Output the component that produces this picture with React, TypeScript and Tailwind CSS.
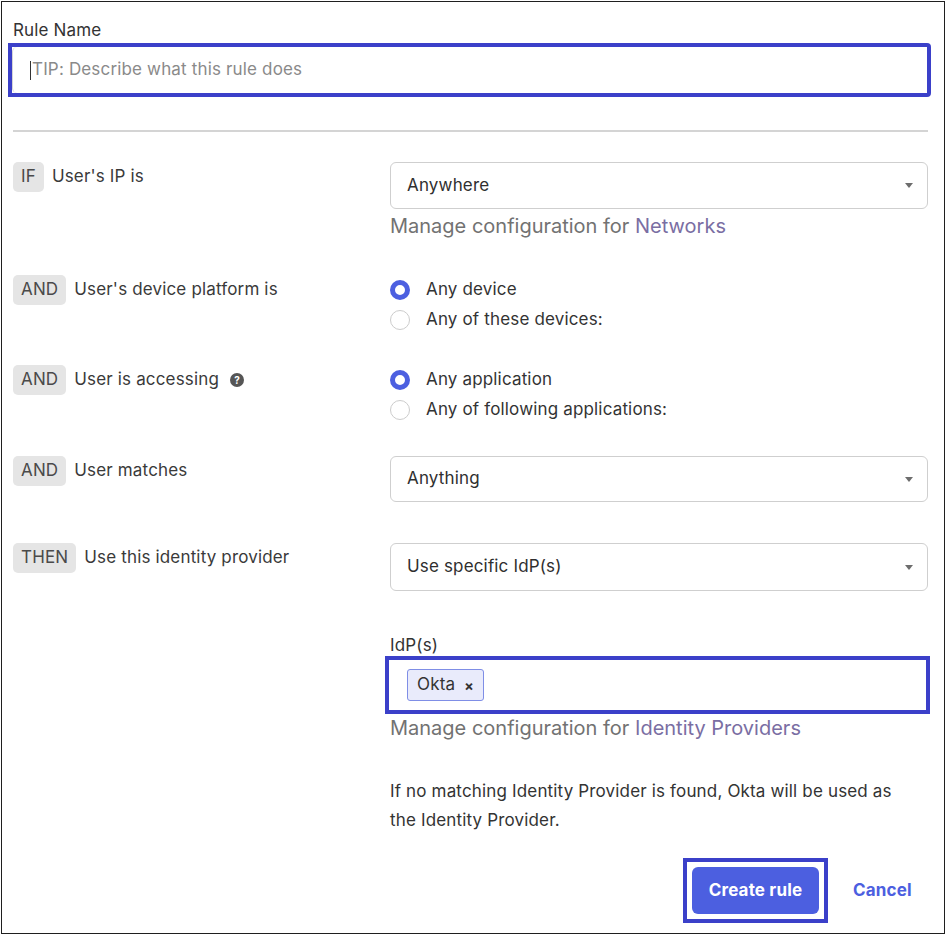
import React from "react";

const font = { fontFamily: "Inter, 'Noto Sans', sans-serif" };

function Badge({ children }: { children: React.ReactNode }) {
  return (
    <span className="flex h-[30px] items-center rounded-[5px] bg-[#e5e5e5] px-[8px] text-[17px] text-[#4a4a4a]">
      {children}
    </span>
  );
}

function Select({ value, h }: { value: string; h: string }) {
  return (
    <div className={`flex ${h} w-[538px] items-center justify-between rounded-[6px] border border-[#cfcfcf] pl-[16px] pr-[14px] text-[17px] text-[#2f2f2f]`}>
      <span>{value}</span>
      <svg width="8" height="5" viewBox="0 0 8 5">
        <path d="M0 0h8L4 5z" fill="#6d6d6d" />
      </svg>
    </div>
  );
}

function Radio({ checked, label }: { checked?: boolean; label: string }) {
  return (
    <div className="flex h-[30px] items-center gap-[16px] text-[17px] text-[#333]">
      {checked ? (
        <span className="h-[20px] w-[20px] rounded-full border-[5px] border-[#4c5fe0] bg-white" />
      ) : (
        <span className="h-[20px] w-[20px] rounded-full border-[1.5px] border-[#cccccc] bg-white" />
      )}
      <span>{label}</span>
    </div>
  );
}

function Manage({ link }: { link: string }) {
  return (
    <div className="text-[20px] leading-[24px] tracking-normal text-[#727272]">
      Manage configuration for <span className="text-[#7a6ea3]">{link}</span>
    </div>
  );
}

function Row({
  badge,
  label,
  extra,
  className,
  children,
}: {
  badge: string;
  label: string;
  extra?: React.ReactNode;
  className?: string;
  children: React.ReactNode;
}) {
  return (
    <div className={`flex items-start ${className ?? ""}`}>
      <div className="flex w-[377px] items-center gap-[8px]">
        <Badge>{badge}</Badge>
        <span className="text-[17px] text-[#3a3a3a]">{label}</span>
        {extra}
      </div>
      <div className="w-[538px]">{children}</div>
    </div>
  );
}

export default function App() {
  return (
    <div className="h-[936px] w-[947px] bg-white p-px tracking-[0.01em]" style={font}>
      <div className="h-[933px] w-[944px] border border-[#1f1f1f] pl-[11px] pt-[18px]">
        <div className="text-[17px] leading-[20px] text-[#333]">Rule Name</div>

        <div className="-ml-[5px] mt-[3px] h-[54px] w-[923px] rounded-r-[4px] border-[4px] border-[#3b40c9] bg-white">
          <div className="flex h-full items-center rounded-l-[5px] border-l border-[#d5d5d5] pl-[17px] text-[17px] text-[#8a8a8a]">
            <span className="mr-px h-[19px] w-px bg-[#333]" />
            TIP: Describe what this rule does
          </div>
        </div>

        <div className="mt-[33px] h-[2px] w-[915px] bg-[#d4d4d4]" />

        <div className="mt-[30px]">
          <Row badge="IF" label="User's IP is">
            <Select value="Anywhere" h="h-[47px]" />
            <div className="mt-[5px]">
              <Manage link="Networks" />
            </div>
          </Row>

          <Row badge="AND" label="User's device platform is" className="mt-[37px]">
            <Radio checked label="Any device" />
            <Radio label="Any of these devices:" />
          </Row>

          <Row
            badge="AND"
            label="User is accessing"
            className="mt-[30px]"
            extra={
              <span className="ml-[3px] flex h-[14px] w-[14px] items-center justify-center rounded-full bg-[#555] text-[10px] font-bold leading-none tracking-normal text-white">
                ?
              </span>
            }
          >
            <Radio checked label="Any application" />
            <Radio label="Any of following applications:" />
          </Row>

          <Row badge="AND" label="User matches" className="mt-[31px]">
            <Select value="Anything" h="h-[46px]" />
          </Row>

          <Row badge="THEN" label="Use this identity provider" className="mt-[41px]">
            <Select value="Use specific IdP(s)" h="h-[48px]" />

            <div className="mt-[44px] text-[17px] leading-[20px] text-[#333]">IdP(s)</div>
            <div className="-ml-[5px] mt-px flex h-[58px] w-[545px] items-center border-[4px] border-[#3b40c9] bg-white pl-[18px]">
              <span className="flex h-[32px] items-center gap-[9px] rounded-[3px] border-[1.5px] border-[#7f8ee6] bg-[#e9ebfb] px-[9px] text-[17px] text-[#333]">
                Okta
                <span className="text-[14px] font-bold text-[#333]">×</span>
              </span>
            </div>
            <div className="mt-[2px]">
              <Manage link="Identity Providers" />
            </div>

            <p className="mt-[37px] text-[17px] leading-[29px] text-[#333]">
              If no matching Identity Provider is found, Okta will be used as
              <br />
              the Identity Provider.
            </p>

            <div className="mt-[23px] flex items-center">
              <div className="ml-[293px] border-[4px] border-[#3b40c9] p-[5px]">
                <button className="flex h-[47px] w-[127px] items-center justify-center rounded-[6px] bg-[#4c5fe0] text-[17px] font-bold text-white">
                  Create rule
                </button>
              </div>
              <span className="ml-[25px] text-[17px] font-bold text-[#4c5fe0]">Cancel</span>
            </div>
          </Row>
        </div>
      </div>
    </div>
  );
}
